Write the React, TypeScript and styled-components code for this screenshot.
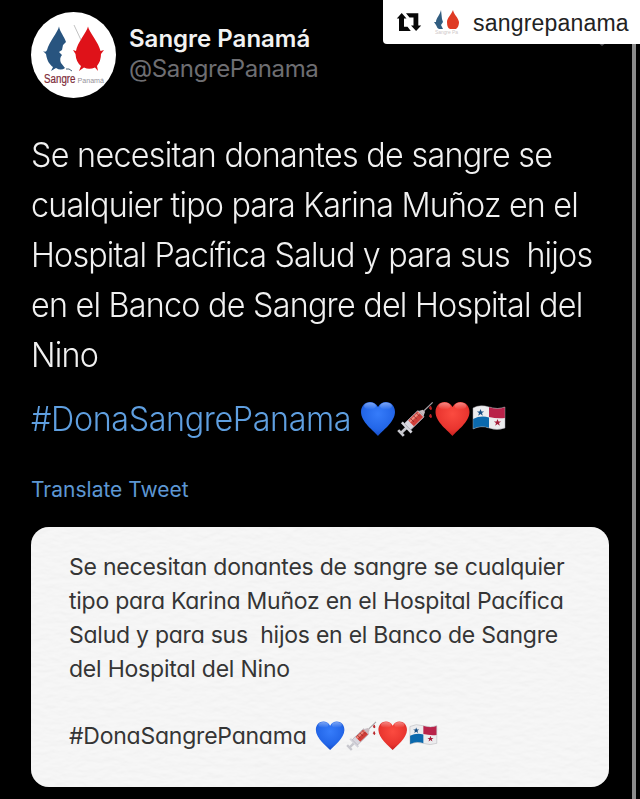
import React from "react";
import styled, { createGlobalStyle } from "styled-components";

const Global = createGlobalStyle`
  * { box-sizing: border-box; }
  body { margin: 0; background: #000; font-family: Inter, "Liberation Sans", sans-serif; }
  svg { display: block; flex: none; }
`;

const Screen = styled.main`
  position: relative;
  width: 640px;
  height: 799px;
  overflow: hidden;
  background: #000;
  padding: 12px 31px 0;
`;

const ScrollTrack = styled.div`
  position: absolute;
  top: 0;
  right: 4px;
  width: 4px;
  height: 100%;
  background: #8b8b8b;
`;

const Caret = styled.svg`
  position: absolute;
  top: 39px;
  left: 597px;
`;

const RepostTag = styled.aside`
  position: absolute;
  top: 0;
  right: 0;
  width: 257px;
  height: 44px;
  padding-left: 13px;
  display: flex;
  align-items: center;
  background: #fff;
  border-bottom-left-radius: 4px;
`;

const RepostName = styled.span`
  margin: 1px 0 0 13px;
  font: 400 23px/30px "Liberation Sans", sans-serif;
  letter-spacing: 0.2px;
  color: #222;
`;

const TagLogo = styled.div`
  margin-left: 12px;
`;

const Profile = styled.header`
  display: flex;
  gap: 13px;
  height: 86px;
`;

const Avatar = styled.div`
  width: 85px;
  height: 86px;
  border-radius: 50%;
  overflow: hidden;
  background: #fff;
`;

const Names = styled.div`
  display: flex;
  flex-direction: column;
  padding-top: 12px;
`;

const Name = styled.strong`
  font-size: 24px;
  line-height: 30px;
  font-weight: 600;
  color: #f2f2f2;
`;

const Handle = styled.span`
  font-size: 24px;
  line-height: 30px;
  font-weight: 400;
  color: #6e6e72;
  letter-spacing: -0.4px;
`;

const Tweet = styled.section`
  margin-top: 32px;
`;

const TweetLine = styled.div<{ $spacing: number }>`
  height: 50px;
  font-size: 34px;
  line-height: 50px;
  font-weight: 300;
  color: #f1f1f1;
  white-space: pre;
  letter-spacing: ${(p) => p.$spacing}px;
  transform: scaleX(0.95);
  transform-origin: left;
`;

const TagLine = styled.div`
  display: flex;
  align-items: center;
  height: 50px;
  margin-top: 14px;
`;

const Hashtag = styled.span`
  width: 329px;
  font-size: 34px;
  font-weight: 300;
  line-height: 50px;
  color: #5f9fe0;
  letter-spacing: -0.4px;
  white-space: nowrap;
  transform: scaleX(0.95);
  transform-origin: left;
`;

const Translate = styled.div`
  margin-top: 31px;
  height: 30px;
  font-size: 21px;
  line-height: 30px;
  color: #5d97d3;
`;

const Card = styled.section`
  position: relative;
  width: 578px;
  height: 260px;
  margin-top: 22px;
  padding: 23px 38px;
  border-radius: 18px;
  overflow: hidden;
  background: #f4f4f4;
`;

const Paper = styled.svg`
  position: absolute;
  inset: 0;
`;

const CardLine = styled.div<{ $spacing: number }>`
  position: relative;
  height: 34px;
  font-size: 23px;
  line-height: 34px;
  font-weight: 400;
  font-feature-settings: "cv11";
  color: #353535;
  white-space: pre;
  letter-spacing: ${(p) => p.$spacing}px;
`;

const CardTagLine = styled.div`
  display: flex;
  align-items: center;
  margin-top: 33px;
`;

const CardHashtag = styled(CardLine)`
  width: 246px;
`;

const EmojiRow = styled.div<{ $scale: number }>`
  position: relative;
  width: ${(p) => 148 * p.$scale}px;
  height: ${(p) => 40 * p.$scale}px;
`;

function AvatarLogo() {
  return (
    <svg width="85" height="86" viewBox="0 0 85 86">
      <path d="M28 14.500C27 20 18 30 16 38Q15 41 12 39L15 42C16 49 19 53 22 55L20 59 25 56Q30 59 34 56L30 51Q28 46 31 43L28 40 31 38 32 33 35 30C33 24 29 20 28 14.500Z" fill="#28547f" />
      <path d="M57 14.500C56 20 46 31 45 39L42 38 44.500 42Q45 50 50 54L48 59 53 55.500Q58 58 64 55.500L67 59 66 54Q70 49 70 42L73 38 69.500 39C68 31 58 20 57 14.500Z" fill="#df1219" />
      <path d="M43 13 50 28" stroke="#999" strokeWidth=".6" />
      <path d="m35 57 3 0 3 2" stroke="#34526b" strokeWidth=".9" fill="none" />
      <text x="13" y="71" fontFamily="Liberation Sans, sans-serif" fontSize="12.5" textLength="31.500" lengthAdjust="spacingAndGlyphs" fill="#7d2b39" stroke="#7d2b39" strokeWidth=".2">
        Sangre
      </text>
      <text x="46.500" y="71" fontFamily="Liberation Sans, sans-serif" fontSize="7.5" textLength="26.500" lengthAdjust="spacingAndGlyphs" fill="#96939a">
        Panamá
      </text>
    </svg>
  );
}

function SmallLogo() {
  return (
    <svg width="26" height="26" viewBox="0 0 26 26">
      <path d="M7 1C6 6 2 9 2 13L0 13 2 16Q3 19 5 20L9 20 7 16 9 13 8 10Z" fill="#315d80" />
      <path d="M19 1C17 6 13 9 13 13Q13 19 16 20H22Q25 18 25 13C24 8 20 6 19 1Z" fill="#df3b24" />
      <text x="1" y="25" fontSize="5" textLength="23" fill="#cfc9c9" fontFamily="Liberation Sans, sans-serif">Sangre Pa</text>
    </svg>
  );
}

function RepostIcon() {
  return (
    <svg width="26" height="20" viewBox="0 0 26 20">
      <path d="M.8 6.500 5.700 1 10.500 6.500H8V14.800H11.500L14.800 19H3V6.500Z M10 1.200H22.300V13.500H25.200L20.100 19 15 13.500H17.500V5.400H13.500Z" fill="#080808" />
    </svg>
  );
}

function Emojis({ scale, id }: { scale: number; id: string }) {
  const heart = "M17 35C13 30 0 21 0 11 0 5 4 1 9 1Q14 1 17 6 20 1 25 1C30 1 34 5 34 11 34 21 21 30 17 35Z";
  const flag = "M113 9Q120 5 129 8T145 8V29Q137 32 129 29T113 30Z";
  return (
    <EmojiRow $scale={scale}>
      <svg width={148 * scale} height={40 * scale} viewBox="0 0 148 40">
        <defs>
          <radialGradient id={id + "b"} cx=".5" cy=".35" r=".65">
            <stop stopColor="#367cfa" /><stop offset=".7" stopColor="#2366e8" /><stop offset="1" stopColor="#164bc5" />
          </radialGradient>
          <radialGradient id={id + "r"} cx=".5" cy=".35" r=".65">
            <stop stopColor="#fb4b40" /><stop offset=".7" stopColor="#e9352f" /><stop offset="1" stopColor="#c5201f" />
          </radialGradient>
          <linearGradient id={id + "s"} x1="0" y1="0" x2="0" y2="1">
            <stop stopColor="#fff" stopOpacity=".4" /><stop offset="1" stopColor="#fff" stopOpacity="0" />
          </linearGradient>
          <clipPath id={id + "f"}>
            <path d={flag} />
          </clipPath>
        </defs>
        <path d={heart} transform="translate(1 2)" fill={`url(#${id}b)`} />
        <ellipse cx="10" cy="7" rx="6" ry="3.5" fill={`url(#${id}s)`} />
        <ellipse cx="26" cy="7" rx="6" ry="3.5" fill={`url(#${id}s)`} />
        <g transform="translate(41 34) rotate(-44)">
          <path d="M0-4V4M0 0H8" stroke="#c8c8ce" strokeWidth="2.8" />
          <path d="M8-7V7" stroke="#d5d5dc" strokeWidth="2.6" />
          <rect x="9" y="-4.5" width="19" height="9" rx="1" fill="#d9d7df" stroke="#aaa7b0" strokeWidth=".7" />
          <rect x="14" y="-4" width="13" height="8" fill="#cf3f39" />
          <path d="M14-2H27" stroke="#f08a7c" strokeWidth="2" />
          <path d="M17-4V1M21-4V1M25-4V1" stroke="#7d2528" strokeWidth=".7" />
          <path d="M28-3.500 32-1.500V1.500L28 3.500Z" fill="#c8bcc0" />
          <path d="M32 0H44" stroke="#a4a0a5" strokeWidth="1.2" />
        </g>
        <path d="M70.500 7Q68.500 10 70.500 10.500T70.500 7M70.500 15Q68.500 18 70.500 18.500T70.500 15" fill="#b62327" stroke="#b62327" strokeWidth="1" />
        <path d={heart} transform="translate(75.500 2)" fill={`url(#${id}r)`} />
        <ellipse cx="84.500" cy="7" rx="6" ry="3.5" fill={`url(#${id}s)`} />
        <ellipse cx="100.500" cy="7" rx="6" ry="3.5" fill={`url(#${id}s)`} />
        <g clipPath={`url(#${id}f)`}>
          <rect x="113" y="4" width="33" height="29" fill="#ececee" />
          <path d="M129 4H146V19Q137 20 129 18Z" fill="#b9234a" />
          <path d="M113 20Q121 16 129 18.500V33H113Z" fill="#0b69ad" />
          <path d="m120.500 10 1 2.500h2.600l-2.100 1.600.8 2.600-2.300-1.600-2.300 1.600.8-2.600-2.100-1.600h2.600Z" fill="#174e83" />
          <path d="m137.500 20 1 2.500h2.600l-2.100 1.600.8 2.600-2.300-1.600-2.300 1.600.8-2.600-2.100-1.600h2.600Z" fill="#a51c38" />
        </g>
        <path d={flag} fill="none" stroke="#a3a3a8" strokeOpacity=".6" strokeWidth=".8" />
      </svg>
    </EmojiRow>
  );
}

const tweetLines: [string, number][] = [
  ["Se necesitan donantes de sangre se", -0.74],
  ["cualquier tipo para Karina Muñoz en el", -0.86],
  ["Hospital Pacífica Salud y para sus  hijos", -0.87],
  ["en el Banco de Sangre del Hospital del", -0.8],
  ["Nino", -0.8],
];

const cardLines: [string, number][] = [
  ["Se necesitan donantes de sangre se cualquier", -0.23],
  ["tipo para Karina Muñoz en el Hospital Pacífica", -0.25],
  ["Salud y para sus  hijos en el Banco de Sangre", -0.25],
  ["del Hospital del Nino", -0.22],
];

export default function App() {
  return (
    <>
      <Global />
      <Screen>
        <ScrollTrack />
        <Caret width="10" height="8" viewBox="0 0 10 8">
          <path d="m1 3 4 3 4-3" fill="none" stroke="#55555a" strokeWidth="1.500" />
        </Caret>
        <Profile>
          <Avatar><AvatarLogo /></Avatar>
          <Names>
            <Name>Sangre Panamá</Name>
            <Handle>@SangrePanama</Handle>
          </Names>
        </Profile>
        <Tweet>
          {tweetLines.map(([text, spacing]) => (
            <TweetLine key={text} $spacing={spacing}>{text}</TweetLine>
          ))}
          <TagLine>
            <Hashtag>#DonaSangrePanama</Hashtag>
            <Emojis scale={1} id="large" />
          </TagLine>
        </Tweet>
        <Translate>Translate Tweet</Translate>
        <Card>
          <Paper width="578" height="260" aria-hidden="true">
            <filter id="grain" x="0" y="0" width="100%" height="100%">
              <feTurbulence type="fractalNoise" baseFrequency=".08 .18" numOctaves="3" seed="4" />
              <feDiffuseLighting lightingColor="#fafafa" surfaceScale=".5" diffuseConstant="1.12">
                <feDistantLight azimuth="90" elevation="60" />
              </feDiffuseLighting>
            </filter>
            <rect width="578" height="260" filter="url(#grain)" opacity=".28" />
          </Paper>
          {cardLines.map(([text, spacing]) => (
            <CardLine key={text} $spacing={spacing}>{text}</CardLine>
          ))}
          <CardTagLine>
            <CardHashtag $spacing={-0.23}>#DonaSangrePanama</CardHashtag>
            <Emojis scale={0.84} id="small" />
          </CardTagLine>
        </Card>
        <RepostTag>
          <RepostIcon />
          <TagLogo><SmallLogo /></TagLogo>
          <RepostName>sangrepanama</RepostName>
        </RepostTag>
      </Screen>
    </>
  );
}
